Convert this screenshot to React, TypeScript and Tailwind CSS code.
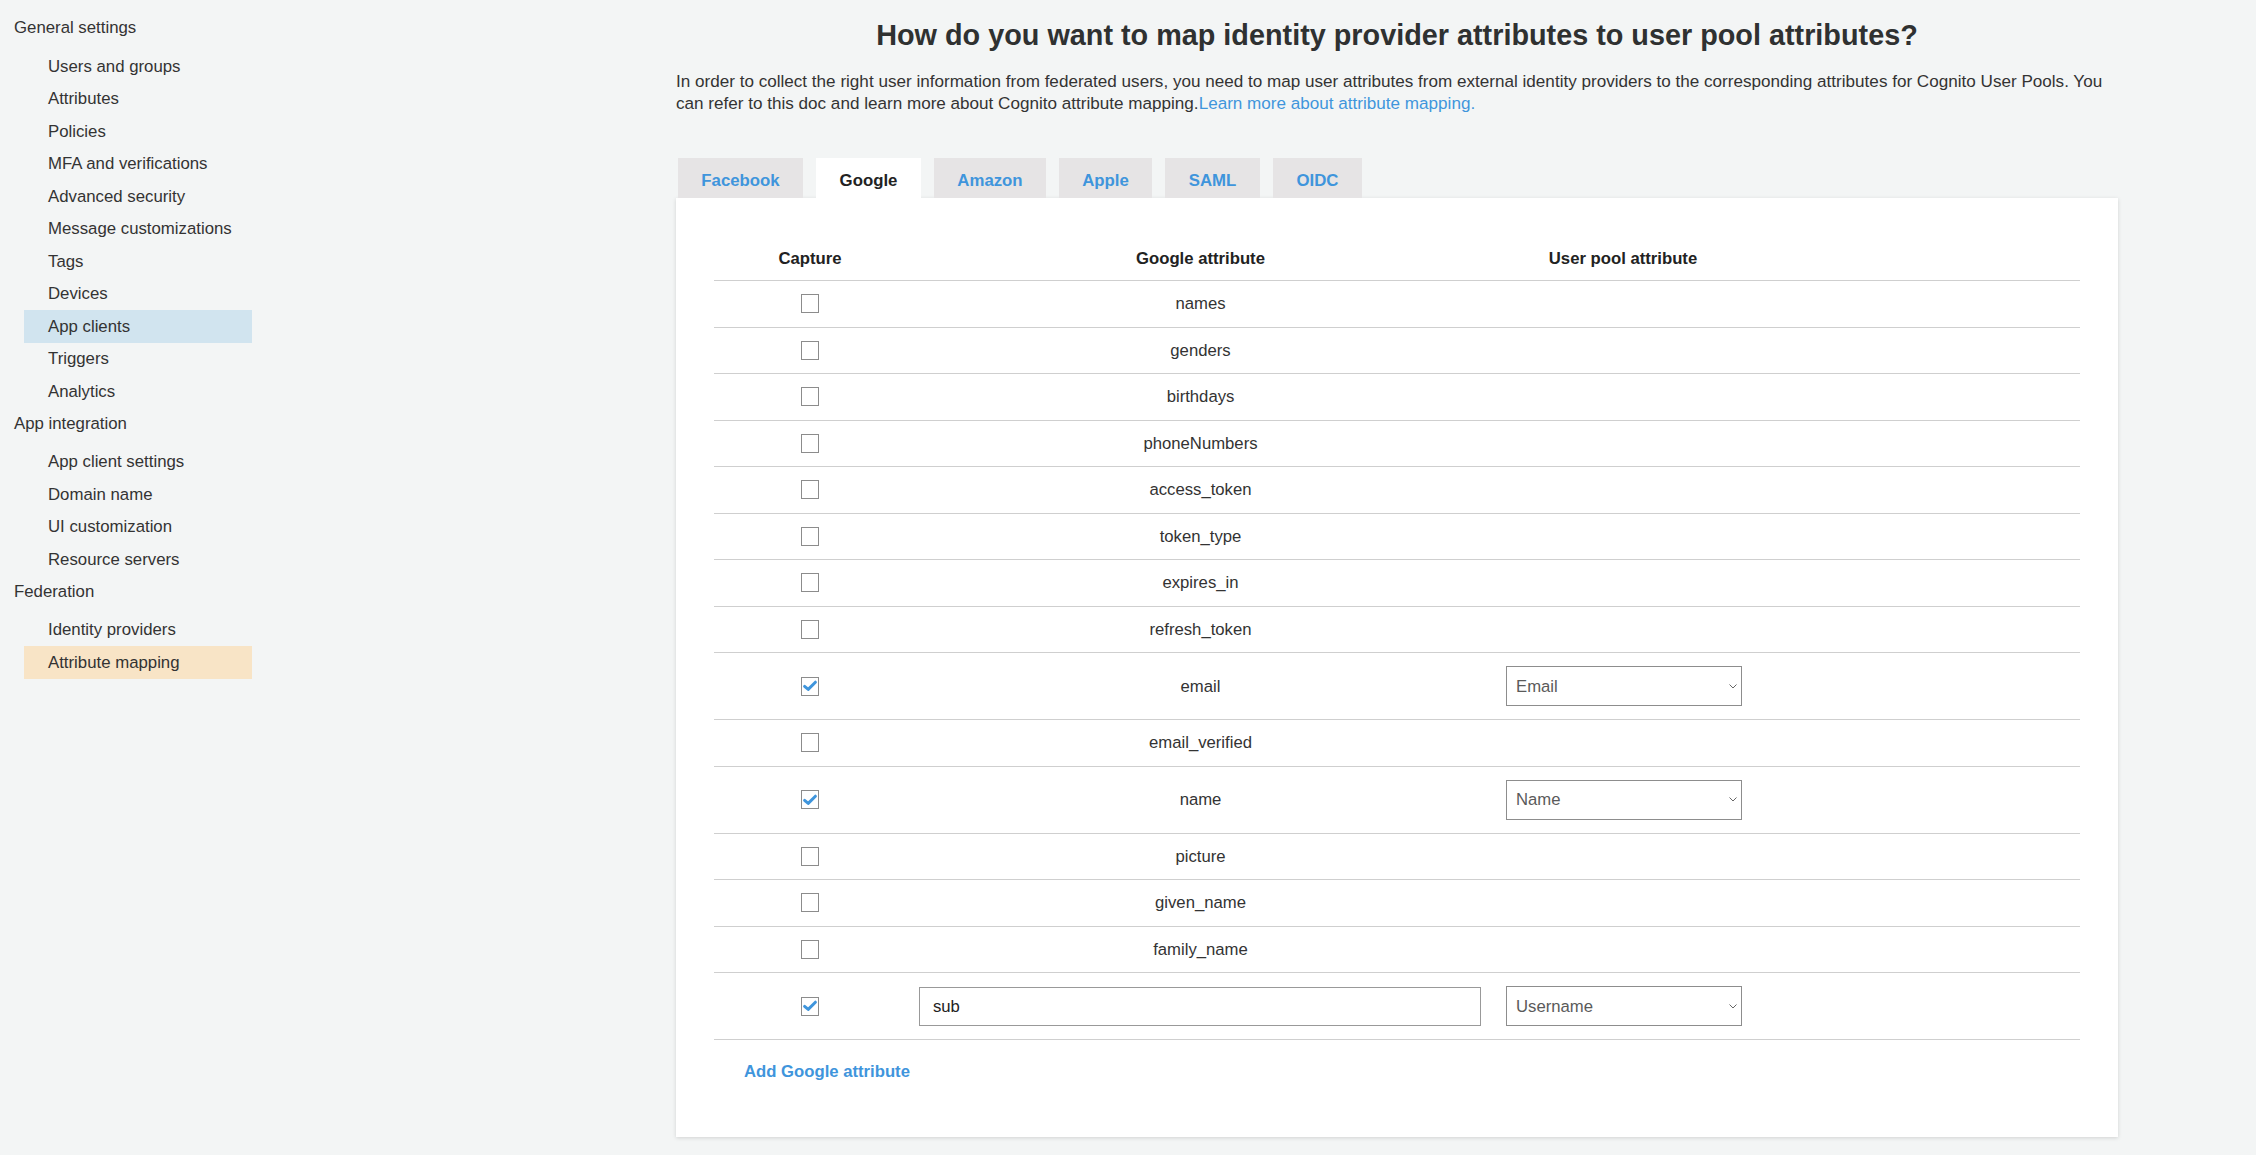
import React from "react";

const font = "font-['Liberation_Sans',Arial,sans-serif]";

type NavItem = { label: string; tone?: "blue" | "peach" };
const groups: { title: string; items: NavItem[] }[] = [
  {
    title: "General settings",
    items: [
      { label: "Users and groups" },
      { label: "Attributes" },
      { label: "Policies" },
      { label: "MFA and verifications" },
      { label: "Advanced security" },
      { label: "Message customizations" },
      { label: "Tags" },
      { label: "Devices" },
      { label: "App clients", tone: "blue" },
      { label: "Triggers" },
      { label: "Analytics" },
    ],
  },
  {
    title: "App integration",
    items: [
      { label: "App client settings" },
      { label: "Domain name" },
      { label: "UI customization" },
      { label: "Resource servers" },
    ],
  },
  {
    title: "Federation",
    items: [{ label: "Identity providers" }, { label: "Attribute mapping", tone: "peach" }],
  },
];

type Row = { name: string; checked?: boolean; select?: string; input?: boolean };
const rows: Row[] = [
  { name: "names" },
  { name: "genders" },
  { name: "birthdays" },
  { name: "phoneNumbers" },
  { name: "access_token" },
  { name: "token_type" },
  { name: "expires_in" },
  { name: "refresh_token" },
  { name: "email", checked: true, select: "Email" },
  { name: "email_verified" },
  { name: "name", checked: true, select: "Name" },
  { name: "picture" },
  { name: "given_name" },
  { name: "family_name" },
  { name: "sub", checked: true, select: "Username", input: true },
];

const tabs = [
  { label: "Facebook", w: "w-[125px]" },
  { label: "Google", w: "w-[105px]", active: true },
  { label: "Amazon", w: "w-[112px]" },
  { label: "Apple", w: "w-[93px]" },
  { label: "SAML", w: "w-[95px]" },
  { label: "OIDC", w: "w-[89px]" },
];

function Checkbox({ checked }: { checked?: boolean }) {
  return (
    <div className="w-[18px] h-[19px] border border-[#8c8c8c] bg-white flex items-center justify-center">
      {checked && (
        <svg width="16" height="16" viewBox="0 0 16 16">
          <path d="M2.6 8.4 L6.2 11.4 L13.4 4.2" fill="none" stroke="#3f95dc" strokeWidth="3" strokeLinecap="round" strokeLinejoin="round" />
        </svg>
      )}
    </div>
  );
}

function Select({ value }: { value: string }) {
  return (
    <div className="w-[236px] h-[40px] border border-[#8d8d8d] bg-white flex items-center justify-between pl-[9px] pr-[3px]">
      <span className="text-[16.7px] text-[#5a5a5a]">{value}</span>
      <svg width="10" height="7" viewBox="0 0 10 7">
        <path d="M1.5 1.5 L5 5 L8.5 1.5" fill="none" stroke="#666" strokeWidth="1" />
      </svg>
    </div>
  );
}

export default function App() {
  return (
    <div className={`min-h-screen w-full bg-[#f3f5f5] flex text-[#333] ${font}`}>
      <aside className="w-[252px] shrink-0 pt-[12px]">
        {groups.map((g) => (
          <div key={g.title}>
            <div className="h-[32px] flex items-center pl-[14px] text-[16.8px] text-[#333] mb-[6px]">{g.title}</div>
            {g.items.map((it) => (
              <div
                key={it.label}
                className={`ml-[24px] w-[228px] h-[32.5px] flex items-center pl-[24px] text-[16.8px] text-[#333] ${
                  it.tone === "blue" ? "bg-[#d1e4ef]" : it.tone === "peach" ? "bg-[#f8e4c6]" : ""
                }`}
              >
                {it.label}
              </div>
            ))}
          </div>
        ))}
      </aside>

      <main className="ml-[424px] w-[1442px] shrink-0 pt-[18px] pb-[18px]">
        <h1 className="text-center font-bold text-[28.8px] leading-[34px] text-[#2f3131]">
          How do you want to map identity provider attributes to user pool attributes?
        </h1>
        <p className="mt-[19px] text-[17.1px] leading-[21.6px] text-[#333]">
          In order to collect the right user information from federated users, you need to map user attributes from external identity providers to the corresponding attributes for Cognito User Pools. You can refer to this doc and learn more about Cognito attribute mapping.
          <a className="text-[#3f95dc]">Learn more about attribute mapping.</a>
        </p>

        <div className="mt-[44px] flex gap-[13px] pl-[2px]">
          {tabs.map((t) => (
            <div
              key={t.label}
              className={`${t.w} h-[40px] pt-[4px] flex items-center justify-center font-bold text-[16.8px] ${
                t.active ? "bg-white text-[#222]" : "bg-[#e6e4e5] text-[#3f95dc]"
              }`}
            >
              {t.label}
            </div>
          ))}
        </div>

        <section className="bg-white shadow-[0_1px_4px_rgba(0,0,0,0.14)] pt-[38px] px-[38px] pb-[55px]">
          <div className="grid grid-cols-[192px_589px_256px_1fr] h-[45px] items-center border-b border-[#cfcfcf] font-bold text-[16.7px] text-[#222]">
            <div className="text-center">Capture</div>
            <div className="text-center">Google attribute</div>
            <div className="text-center">User pool attribute</div>
            <div />
          </div>
          {rows.map((r) => (
            <div
              key={r.name}
              className={`grid grid-cols-[192px_589px_256px_1fr] items-center border-b border-[#cfcfcf] ${
                r.select ? "h-[67px]" : "h-[46.5px]"
              }`}
            >
              <div className="flex justify-center">
                <Checkbox checked={r.checked} />
              </div>
              {r.input ? (
                <div className="pl-[13px] pr-[14px]">
                  <div className="h-[39px] border border-[#999] flex items-center pl-[13px] text-[16.7px] text-[#222]">
                    {r.name}
                  </div>
                </div>
              ) : (
                <div className="text-center text-[16.7px] text-[#333]">{r.name}</div>
              )}
              <div className="pl-[11px]">{r.select && <Select value={r.select} />}</div>
              <div />
            </div>
          ))}
          <div className="mt-[22px] ml-[30px] leading-[20px] font-bold text-[16.7px] text-[#3f95dc]">
            Add Google attribute
          </div>
        </section>
      </main>
    </div>
  );
}
